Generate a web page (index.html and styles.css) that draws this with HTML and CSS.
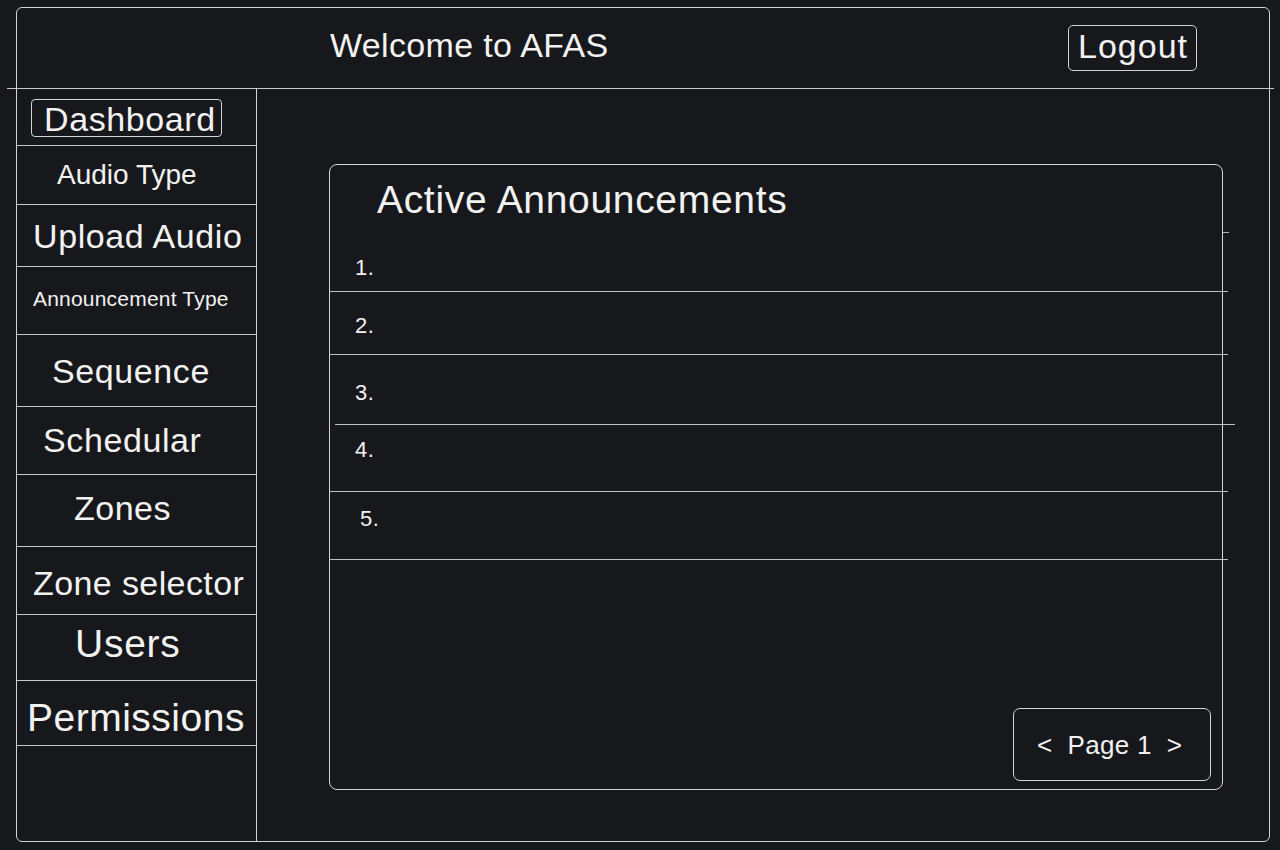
FILE: index.html
```html
<!DOCTYPE html>
<html lang="en">
<head>
<meta charset="utf-8">
<title>AFAS Dashboard</title>
<link rel="stylesheet" href="styles.css">
</head>
<body>
<div class="frame">
  <header class="header">
    <h1 class="welcome">Welcome to AFAS</h1>
    <button class="logout">Logout</button>
  </header>
  <div class="header-rule"></div>
  <div class="body">
    <nav class="sidebar">
      <div class="nav-row nav-dashboard"><span class="nav-active">Dashboard</span></div>
      <div class="nav-row nav-audio-type">Audio Type</div>
      <div class="nav-row nav-upload">Upload Audio</div>
      <div class="nav-row nav-ann-type">Announcement Type</div>
      <div class="nav-row nav-sequence">Sequence</div>
      <div class="nav-row nav-schedular">Schedular</div>
      <div class="nav-row nav-zones">Zones</div>
      <div class="nav-row nav-zone-sel">Zone selector</div>
      <div class="nav-row nav-users">Users</div>
      <div class="nav-row nav-perms">Permissions</div>
    </nav>
    <main class="main">
      <section class="card">
        <h2 class="card-title">Active Announcements</h2>
        <div class="stray-tick"></div>
        <ol class="ann-list">
          <li class="ann-item ann-1">1.</li>
          <li class="ann-item ann-2">2.</li>
          <li class="ann-item ann-3">3.</li>
          <li class="ann-item ann-4">4.</li>
          <li class="ann-item ann-5">5.</li>
        </ol>
        <div class="pager">
          <span class="pager-arrow">&lt;</span>
          <span class="pager-label">Page 1</span>
          <span class="pager-arrow">&gt;</span>
        </div>
      </section>
    </main>
  </div>
</div>
</body>
</html>
```

FILE: styles.css
```css
* { box-sizing: border-box; }

html, body {
  margin: 0;
  padding: 0;
  background: #17181b;
}

body {
  width: 1280px;
  height: 850px;
  overflow: hidden;
  font-family: "Liberation Sans", Arial, sans-serif;
  color: #f2f2f2;
  padding-top: 7px;
}

.frame {
  margin-left: 16px;
  width: 1254px;
  height: 835px;
  border: 1px solid #d4d4d4;
  border-radius: 6px;
  display: flex;
  flex-direction: column;
}

.header {
  height: 80px;
  display: flex;
  align-items: flex-start;
  justify-content: space-between;
  padding-left: 313px;
  padding-right: 72px;
}

.welcome {
  margin: 20px 0 0 0;
  font-size: 34px;
  line-height: 34px;
  font-weight: 400;
  letter-spacing: 0.35px;
}

.logout {
  margin-top: 17px;
  width: 129px;
  height: 46px;
  border: 1px solid #d4d4d4;
  border-radius: 5px;
  background: transparent;
  color: #f2f2f2;
  font-family: inherit;
  font-size: 34px;
  line-height: 34px;
  letter-spacing: 1px;
  padding: 3px 0 7px 9px;
  text-align: left;
}

.header-rule {
  height: 1px;
  background: #c8c8c8;
  margin: 0 -5px 0 -10px;
}

.body {
  flex: 1;
  display: flex;
}

.sidebar {
  width: 240px;
  border-right: 1px solid #d4d4d4;
  display: grid;
  grid-template-rows: 57px 59px 62px 68px 72px 68px 72px 68px 66px 65px;
  align-content: start;
}

.nav-row {
  display: flex;
  align-items: center;
  border-bottom: 1px solid #c8c8c8;
  margin-right: -1px;
  font-size: 34px;
  line-height: 34px;
  letter-spacing: 0.6px;
  white-space: nowrap;
}

.nav-dashboard { padding-left: 14px; align-items: flex-start; padding-top: 10px; }
.nav-active {
  display: block;
  height: 38px;
  width: 191px;
  border: 1px solid #d4d4d4;
  border-radius: 4px;
  padding: 2px 0 0 12px;
  font-size: 34px;
  line-height: 34px;
}
.nav-audio-type { padding-left: 40px; font-size: 28px; line-height: 28px; letter-spacing: 0; }
.nav-upload { padding-left: 16px; }
.nav-ann-type { padding-left: 16px; font-size: 21px; line-height: 21px; letter-spacing: 0.2px; padding-bottom: 4px; }
.nav-sequence { padding-left: 35px; }
.nav-schedular { padding-left: 26px; padding-bottom: 2px; }
.nav-zones { padding-left: 57px; padding-bottom: 6px; letter-spacing: 0.5px; }
.nav-zone-sel { padding-left: 16px; padding-top: 4px; letter-spacing: 0.4px; }
.nav-users { padding-left: 58px; font-size: 39px; line-height: 39px; letter-spacing: 0.75px; padding-bottom: 8px; }
.nav-perms { padding-left: 10px; font-size: 39px; line-height: 39px; letter-spacing: 0.5px; padding-top: 8px; }

.main {
  flex: 1;
  padding: 75px 0 0 72px;
}

.card {
  width: 894px;
  height: 626px;
  border: 1px solid #d4d4d4;
  border-radius: 8px;
  display: flex;
  flex-direction: column;
}

.card-title {
  margin: 15px 0 0 47px;
  font-size: 39px;
  line-height: 39px;
  font-weight: 400;
  letter-spacing: 0.68px;
}

.stray-tick {
  align-self: flex-end;
  width: 6px;
  height: 1px;
  margin: 13px -7px 0 0;
  background: #b4b4b4;
}

.ann-list {
  list-style: none;
  margin: 0;
  padding: 0;
}

.ann-item {
  border-bottom: 1px solid #c0c0c0;
  margin: 0 -6px 0 -1px;
  padding-left: 26px;
  font-size: 22px;
  line-height: 22px;
  letter-spacing: 0.5px;
}

.ann-1 { height: 59px; padding-top: 24px; }
.ann-2 { height: 63px; padding-top: 23px; }
.ann-3 { height: 70px; padding-top: 27px; margin: 0 -13px 0 5px; padding-left: 20px; }
.ann-4 { height: 67px; padding-top: 14px; }
.ann-5 { height: 68px; padding-top: 16px; padding-left: 31px; }

.pager {
  margin-top: auto;
  margin-right: 11px;
  margin-bottom: 8px;
  align-self: flex-end;
  width: 198px;
  height: 73px;
  border: 1px solid #d4d4d4;
  border-radius: 7px;
  display: flex;
  align-items: center;
  gap: 15px;
  padding-left: 23px;
  font-size: 26px;
  line-height: 26px;
  letter-spacing: 0.3px;
}
```
